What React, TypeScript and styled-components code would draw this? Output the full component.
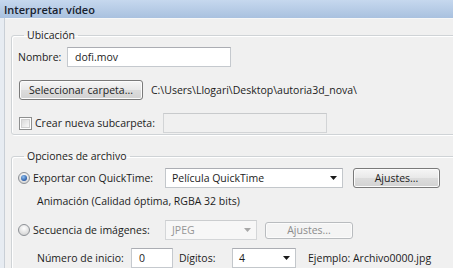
import * as React from 'react';
import styled, { createGlobalStyle } from 'styled-components';

// ========================
// Globals
// ========================

const GlobalStyle = createGlobalStyle`
  html, body {
    margin: 0;
    padding: 0;
    background: #f0f0f0;
  }
  body {
    font-family: 'Open Sans', 'Noto Sans', sans-serif;
    font-size: 10.5px;
    color: #1c1c1c;
  }
`;

// ========================
// Window chrome
// ========================

const Window = styled.div`
  width: 453px;
  height: 268px;
  overflow: hidden;
  display: flex;
  flex-direction: column;
  background: #f0f0f0;
`;

const TitleBar = styled.div`
  height: 18px;
  flex: 0 0 18px;
  display: flex;
  align-items: center;
  padding-left: 4px;
  background: linear-gradient(#c6d8ee, #a9c1df);
  color: #17212e;
  font-size: 11px;
  font-weight: 600;
  white-space: nowrap;
`;

const Body = styled.div`
  flex: 1;
  border-left: 4px solid #e7ecf2;
  box-shadow: inset 1px 0 0 #c9cfd6, inset 0 1px 0 #f7f7f7;
  padding: 10px 0 0 7px;
`;

// ========================
// Group boxes
// ========================

const Group = styled.fieldset<{ $spaced?: boolean }>`
  margin: ${(p) => (p.$spaced ? '14px' : '0')} 0 0 0;
  width: 470px;
  box-sizing: border-box;
  border: 1px solid #cfd3d6;
  border-radius: 3px;
  box-shadow: inset 1px 1px 0 #fff, 1px 1px 0 #fff;
  padding: 5px 0 ${(p) => (p.$spaced ? '4px' : '1px')} 6px;
  min-inline-size: 0;
`;

const Legend = styled.legend`
  padding: 0 3px;
  margin-left: 6px;
  line-height: 14px;
  font-size: 10.5px;
  color: #1c1c1c;
`;

const Row = styled.div<{ $top?: number; $h?: number; $indent?: number }>`
  display: flex;
  align-items: center;
  height: ${(p) => p.$h ?? 20}px;
  margin-top: ${(p) => p.$top ?? 0}px;
  padding-left: ${(p) => p.$indent ?? 0}px;
  white-space: nowrap;
`;

const Label = styled.span<{ $w?: number; $muted?: boolean }>`
  display: inline-block;
  flex: 0 0 auto;
  width: ${(p) => (p.$w ? `${p.$w}px` : 'auto')};
  color: ${(p) => (p.$muted ? '#8a8a8a' : '#1c1c1c')};
`;

// ========================
// Controls
// ========================

const TextBox = styled.div<{ $w: number; $disabled?: boolean; $ml?: number }>`
  box-sizing: border-box;
  width: ${(p) => p.$w}px;
  height: 20px;
  margin-left: ${(p) => p.$ml ?? 0}px;
  display: flex;
  align-items: center;
  padding-left: 7px;
  border: 1px solid ${(p) => (p.$disabled ? '#d2d4d6' : '#c5c9ce')};
  border-top-color: ${(p) => (p.$disabled ? '#c8cacc' : '#abadb3')};
  background: ${(p) => (p.$disabled ? '#f0f0f0' : '#fff')};
`;

const Button = styled.div<{ $w: number; $h?: number; $disabled?: boolean; $ml?: number }>`
  box-sizing: border-box;
  width: ${(p) => p.$w}px;
  height: ${(p) => p.$h ?? 20}px;
  margin-left: ${(p) => p.$ml ?? 0}px;
  display: flex;
  align-items: center;
  justify-content: center;
  border: 1px solid ${(p) => (p.$disabled ? '#b9bcbf' : '#7a7a7a')};
  border-radius: 3px;
  background: ${(p) =>
    p.$disabled
      ? '#f4f4f4'
      : 'linear-gradient(#f6f6f6 0%, #e9e9e9 48%, #dcdcdc 52%, #d2d2d2 100%)'};
  box-shadow: inset 0 0 0 1px ${(p) => (p.$disabled ? '#fbfbfb' : '#fcfcfc')};
  color: ${(p) => (p.$disabled ? '#8c8c8c' : '#1c1c1c')};
`;

const Select = styled.div<{ $w: number; $disabled?: boolean; $ml?: number }>`
  box-sizing: border-box;
  width: ${(p) => p.$w}px;
  height: 20px;
  margin-left: ${(p) => p.$ml ?? 0}px;
  display: flex;
  align-items: center;
  justify-content: space-between;
  padding: 0 5px 0 6px;
  border: 1px solid ${(p) => (p.$disabled ? '#d4d6d8' : '#c3c7cb')};
  border-top-color: ${(p) => (p.$disabled ? '#cbcdcf' : '#abadb3')};
  background: ${(p) => (p.$disabled ? '#f7f7f7' : '#fff')};
  color: ${(p) => (p.$disabled ? '#959595' : '#1c1c1c')};
`;

const OptionItem = styled.label`
  display: flex;
  align-items: center;
  gap: 3px;
`;

const Arrow = ({ muted }: { muted?: boolean }) => (
  <svg width="7" height="4" viewBox="0 0 7 4">
    <path d="M0 0 H7 L3.5 4 Z" fill={muted ? '#a8a8a8' : '#1a1a1a'} />
  </svg>
);

const Radio = ({ checked }: { checked?: boolean }) => (
  <svg width="12" height="12" viewBox="0 0 12 12">
    <defs>
      <radialGradient id="rbg" cx="0.5" cy="0.35" r="0.6">
        <stop offset="0" stopColor="#ffffff" />
        <stop offset="1" stopColor="#d6d6d6" />
      </radialGradient>
      <radialGradient id="rdot" cx="0.4" cy="0.35" r="0.7">
        <stop offset="0" stopColor="#8fc0f0" />
        <stop offset="1" stopColor="#1f4f9c" />
      </radialGradient>
    </defs>
    <circle cx="6" cy="6" r="5.5" fill="url(#rbg)" stroke="#8d9196" />
    {checked && <circle cx="6" cy="6" r="3" fill="url(#rdot)" />}
  </svg>
);

const Check = () => (
  <svg width="13" height="13" viewBox="0 0 13 13">
    <defs>
      <linearGradient id="cbg" x1="0" y1="0" x2="1" y2="1">
        <stop offset="0" stopColor="#d8d8d8" />
        <stop offset="1" stopColor="#fbfbfb" />
      </linearGradient>
    </defs>
    <rect x="0.5" y="0.5" width="12" height="12" fill="#fff" stroke="#8e8f8f" />
    <rect x="2.5" y="2.5" width="8" height="8" fill="url(#cbg)" stroke="#d0d0d0" />
  </svg>
);

// ========================
// App
// ========================

export default function App() {
  return (
    <Window>
      <GlobalStyle />
      <TitleBar>Interpretar vídeo</TitleBar>
      <Body>
        <Group>
          <Legend>Ubicación</Legend>
          <Row>
            <Label $w={49}>Nombre:</Label>
            <TextBox $w={164}>dofi.mov</TextBox>
          </Row>
          <Row $top={13}>
            <Button $w={124} $ml={1}>Seleccionar carpeta...</Button>
            <Label style={{ marginLeft: 8 }}>C:\Users\Llogari\Desktop\autoria3d_nova\</Label>
          </Row>
          <Row $top={13}>
            <OptionItem style={{ width: 144, paddingLeft: 1 }}>
              <Check />
              <Label>Crear nueva subcarpeta:</Label>
            </OptionItem>
            <TextBox $w={164} $disabled />
          </Row>
        </Group>

        <Group $spaced>
          <Legend>Opciones de archivo</Legend>
          <Row>
            <OptionItem style={{ width: 147 }}>
              <Radio checked />
              <Label>Exportar con QuickTime:</Label>
            </OptionItem>
            <Select $w={178}>
              <span>Película QuickTime</span>
              <Arrow />
            </Select>
            <Button $w={87} $ml={10}>Ajustes...</Button>
          </Row>
          <Row $top={6} $h={14} $indent={19}>
            <Label>Animación (Calidad óptima, RGBA 32 bits)</Label>
          </Row>
          <Row $top={12}>
            <OptionItem style={{ width: 147 }}>
              <Radio />
              <Label>Secuencia de imágenes:</Label>
            </OptionItem>
            <Select $w={92} $disabled>
              <span>JPEG</span>
              <Arrow muted />
            </Select>
            <Button $w={88} $h={17} $ml={8} $disabled>Ajustes...</Button>
          </Row>
          <Row $top={8} $indent={19}>
            <Label $w={94}>Número de inicio:</Label>
            <TextBox $w={42}>0</TextBox>
            <Label style={{ marginLeft: 6 }} $w={53}>Dígitos:</Label>
            <Select $w={64}>
              <span>4</span>
              <Arrow />
            </Select>
            <Label style={{ marginLeft: 12 }}>Ejemplo: Archivo0000.jpg</Label>
          </Row>
        </Group>
      </Body>
    </Window>
  );
}
